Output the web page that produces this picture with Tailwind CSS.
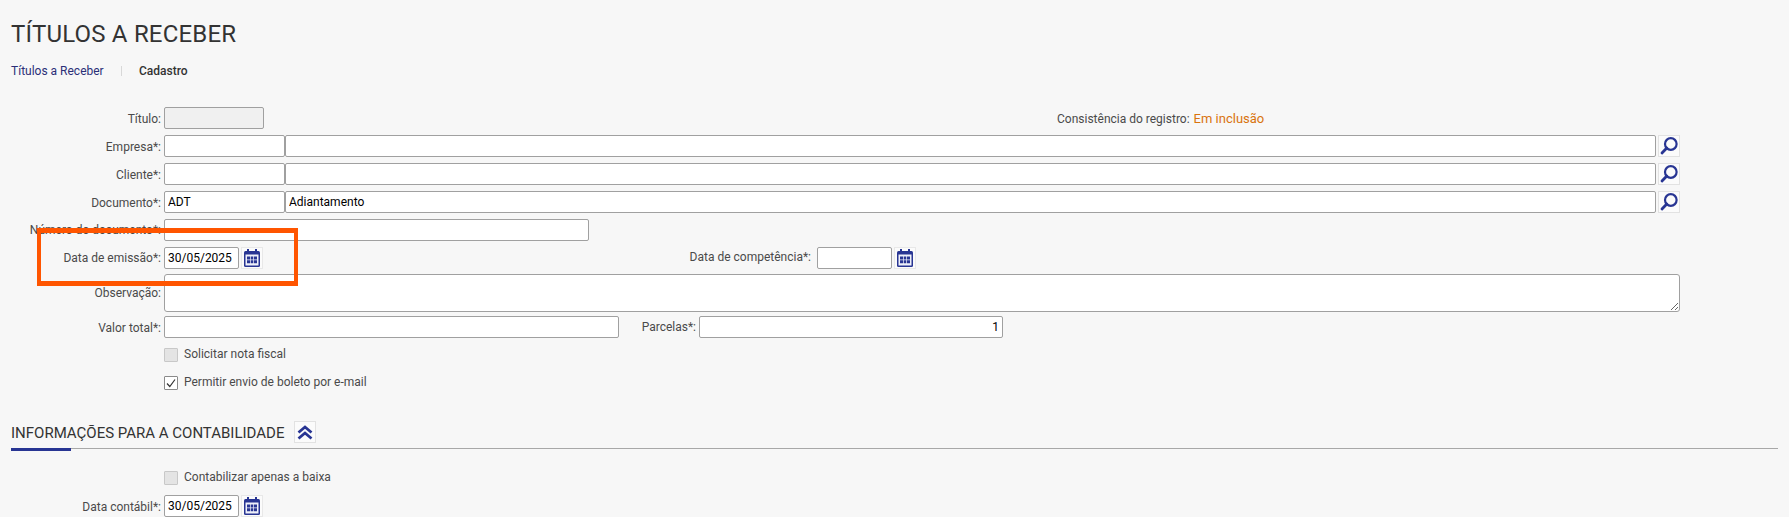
<!DOCTYPE html>
<html lang="pt-BR">
<head>
  <meta charset="UTF-8">
  <title>Títulos a Receber</title>
  <script src="https://cdn.jsdelivr.net/npm/@tailwindcss/browser@4"></script>
</head>
<body class="bg-[#f7f7f7] font-['Roboto',sans-serif] text-[12px] text-[#4a4a4a] h-[517px] overflow-hidden">
  <div class="relative h-[517px] overflow-hidden pt-[18px]">

    <h1 class="pl-[11px] h-[32px] leading-[32px] text-[24px] tracking-[0.2px] text-[#333333]">TÍTULOS A RECEBER</h1>

    <nav class="mt-[13px] pl-[11px] h-[16px] flex items-center">
      <a class="text-[#2b2f77] w-[92px] whitespace-nowrap">Títulos a Receber</a>
      <span class="w-px h-[10px] bg-[#d8d8d8] ml-[18px]"></span>
      <span class="ml-[17px] font-medium text-[#333333]">Cadastro</span>
    </nav>

    <form class="mt-[28px] flex flex-col">
      <div class="flex items-center h-[22px]">
        <label class="w-[161px] text-right pt-[2px]">Título:</label>
        <input disabled class="ml-[3px] w-[100px] h-[22px] bg-[#f0f0f0] border border-[#a0a0a0] rounded-[2px]">
        <span class="ml-[793px] pt-[2px]">Consistência do registro:</span>
        <span class="ml-[4px] pt-[2px] text-[13px] text-[#d9730d]">Em inclusão</span>
      </div>

      <div class="flex items-center h-[22px] mt-[6px]">
        <label class="w-[161px] text-right pt-[2px]">Empresa*:</label>
        <input class="ml-[3px] w-[121px] h-[22px] bg-white border border-[#a0a0a0] rounded-[2px]">
        <input class="w-[1371px] h-[22px] bg-white border border-[#a0a0a0] rounded-[2px]">
        <button type="button" class="ml-[2px] w-[22px] h-[22px] bg-[#fbfbfb] border border-[#e2e2e2] flex items-center justify-center">
          <svg width="18" height="18" viewBox="0 0 18 18" fill="none" stroke="#283593"><circle cx="10.8" cy="7" r="5.8" stroke-width="2.2"/><path d="M6.8 11 2 16" stroke-width="2.8" stroke-linecap="round"/></svg>
        </button>
      </div>

      <div class="flex items-center h-[22px] mt-[6px]">
        <label class="w-[161px] text-right pt-[2px]">Cliente*:</label>
        <input class="ml-[3px] w-[121px] h-[22px] bg-white border border-[#a0a0a0] rounded-[2px]">
        <input class="w-[1371px] h-[22px] bg-white border border-[#a0a0a0] rounded-[2px]">
        <button type="button" class="ml-[2px] w-[22px] h-[22px] bg-[#fbfbfb] border border-[#e2e2e2] flex items-center justify-center">
          <svg width="18" height="18" viewBox="0 0 18 18" fill="none" stroke="#283593"><circle cx="10.8" cy="7" r="5.8" stroke-width="2.2"/><path d="M6.8 11 2 16" stroke-width="2.8" stroke-linecap="round"/></svg>
        </button>
      </div>

      <div class="flex items-center h-[22px] mt-[6px]">
        <label class="w-[161px] text-right pt-[2px]">Documento*:</label>
        <input value="ADT" class="ml-[3px] w-[121px] h-[22px] px-[3px] text-black bg-white border border-[#a0a0a0] rounded-[2px]">
        <input value="Adiantamento" class="w-[1371px] h-[22px] px-[3px] text-black bg-white border border-[#a0a0a0] rounded-[2px]">
        <button type="button" class="ml-[2px] w-[22px] h-[22px] bg-[#fbfbfb] border border-[#e2e2e2] flex items-center justify-center">
          <svg width="18" height="18" viewBox="0 0 18 18" fill="none" stroke="#283593"><circle cx="10.8" cy="7" r="5.8" stroke-width="2.2"/><path d="M6.8 11 2 16" stroke-width="2.8" stroke-linecap="round"/></svg>
        </button>
      </div>

      <div class="flex items-center h-[22px] mt-[6px]">
        <label class="w-[161px] text-right whitespace-nowrap">Número do documento*:</label>
        <input class="ml-[3px] w-[425px] h-[22px] bg-white border border-[#a0a0a0] rounded-[2px]">
      </div>

      <div class="flex items-center h-[22px] mt-[6px]">
        <label class="w-[161px] text-right">Data de emissão*:</label>
        <input value="30/05/2025" class="ml-[3px] w-[75px] h-[22px] px-[3px] text-black bg-white border border-[#a0a0a0] rounded-[2px]">
        <button type="button" class="ml-[2px] w-[22px] h-[22px] bg-[#fbfbfb] border border-[#e8e8e8] flex items-center justify-center">
          <svg width="16" height="18" viewBox="0 0 16 18"><rect x="0" y="2" width="16" height="16" rx="1.5" fill="#283593"/><rect x="3" y="0" width="2" height="3" fill="#283593"/><rect x="11" y="0" width="2" height="3" fill="#283593"/><rect x="1.5" y="5.5" width="13" height="11" fill="#eef0fa"/><path d="M3 7.5h3v3H3zM6.7 7.5h2.6v3H6.7zM10 7.5h3v3h-3zM3 11.2h3v3H3zM6.7 11.2h2.6v3H6.7zM10 11.2h3v3h-3z" fill="#283593"/></svg>
        </button>
        <label class="ml-[424px] w-[124px] pb-[2px] text-right whitespace-nowrap">Data de competência*:</label>
        <input class="ml-[6px] w-[75px] h-[22px] bg-white border border-[#a0a0a0] rounded-[2px]">
        <button type="button" class="ml-[2px] w-[22px] h-[22px] bg-[#fbfbfb] border border-[#e8e8e8] flex items-center justify-center">
          <svg width="16" height="18" viewBox="0 0 16 18"><rect x="0" y="2" width="16" height="16" rx="1.5" fill="#283593"/><rect x="3" y="0" width="2" height="3" fill="#283593"/><rect x="11" y="0" width="2" height="3" fill="#283593"/><rect x="1.5" y="5.5" width="13" height="11" fill="#eef0fa"/><path d="M3 7.5h3v3H3zM6.7 7.5h2.6v3H6.7zM10 7.5h3v3h-3zM3 11.2h3v3H3zM6.7 11.2h2.6v3H6.7zM10 11.2h3v3h-3z" fill="#283593"/></svg>
        </button>
      </div>

      <div class="flex items-start h-[38px] mt-[5px]">
        <label class="w-[161px] text-right mt-[10px]">Observação:</label>
        <textarea class="ml-[3px] w-[1516px] h-[38px] bg-white border border-[#a0a0a0] rounded-[3px]"></textarea>
      </div>

      <div class="flex items-center h-[22px] mt-[4px]">
        <label class="w-[161px] text-right pt-[2px]">Valor total*:</label>
        <input class="ml-[3px] w-[455px] h-[22px] bg-white border border-[#a0a0a0] rounded-[2px]">
        <label class="ml-[22px] w-[55px] text-right">Parcelas*:</label>
        <input value="1" class="ml-[3px] w-[304px] h-[22px] px-[3px] text-right text-black bg-white border border-[#a0a0a0] rounded-[2px]">
      </div>

      <div class="flex items-center h-[14px] mt-[10px] pl-[164px]">
        <span class="w-[14px] h-[14px] bg-[#e4e4e4] border border-[#c8c8c8] rounded-[1px]"></span>
        <span class="ml-[6px] pb-[2px]">Solicitar nota fiscal</span>
      </div>

      <div class="flex items-center h-[14px] mt-[14px] pl-[164px]">
        <span class="w-[14px] h-[14px] bg-white border border-[#8a8a8a] rounded-[1px] flex items-center justify-center">
          <svg width="10" height="10" viewBox="0 0 10 10" fill="none" stroke="#333333" stroke-width="1.2"><path d="M1 5.5 3.8 8.5 9 1.5"/></svg>
        </span>
        <span class="ml-[6px] pb-[2px]">Permitir envio de boleto por e-mail</span>
      </div>
    </form>

    <section class="mt-[31px] mx-[11px]">
      <div class="relative flex items-start h-[28px] border-b border-[#a8a8a8]">
        <h2 class="h-[22px] leading-[22px] pt-px text-[15px] text-[#333333] whitespace-nowrap">INFORMAÇÕES PARA A CONTABILIDADE</h2>
        <button type="button" class="ml-[10px] w-[22px] h-[22px] bg-[#fbfbfb] border border-[#e2e2e2] flex items-center justify-center">
          <svg width="16" height="15" viewBox="0 0 16 15" fill="none" stroke="#283593" stroke-width="2.8"><path d="M1.5 7.5 8 2l6.5 5.5M1.5 13.5 8 8l6.5 5.5"/></svg>
        </button>
        <span class="absolute left-0 bottom-[-3px] w-[60px] h-[3px] bg-[#283593]"></span>
      </div>

      <div class="flex items-center h-[14px] mt-[22px] pl-[153px]">
        <span class="w-[14px] h-[14px] bg-[#e4e4e4] border border-[#c8c8c8] rounded-[1px]"></span>
        <span class="ml-[6px] pb-[2px]">Contabilizar apenas a baixa</span>
      </div>
    </section>

    <div class="flex items-center h-[22px] mt-[10px]">
      <label class="w-[161px] text-right pt-[2px]">Data contábil*:</label>
      <input value="30/05/2025" class="ml-[3px] w-[75px] h-[22px] px-[3px] text-black bg-white border border-[#a0a0a0] rounded-[2px]">
      <button type="button" class="ml-[2px] w-[22px] h-[22px] bg-[#fbfbfb] border border-[#e8e8e8] flex items-center justify-center">
        <svg width="16" height="18" viewBox="0 0 16 18"><rect x="0" y="2" width="16" height="16" rx="1.5" fill="#283593"/><rect x="3" y="0" width="2" height="3" fill="#283593"/><rect x="11" y="0" width="2" height="3" fill="#283593"/><rect x="1.5" y="5.5" width="13" height="11" fill="#eef0fa"/><path d="M3 7.5h3v3H3zM6.7 7.5h2.6v3H6.7zM10 7.5h3v3h-3zM3 11.2h3v3H3zM6.7 11.2h2.6v3H6.7zM10 11.2h3v3h-3z" fill="#283593"/></svg>
      </button>
    </div>

    <!-- destaque laranja por cima do formulario -->
    <div class="absolute left-[37px] top-[228px] w-[261px] h-[58px] border-x-[4px] border-y-[5px] border-[#ff5500]"></div>
  </div>
</body>
</html>
